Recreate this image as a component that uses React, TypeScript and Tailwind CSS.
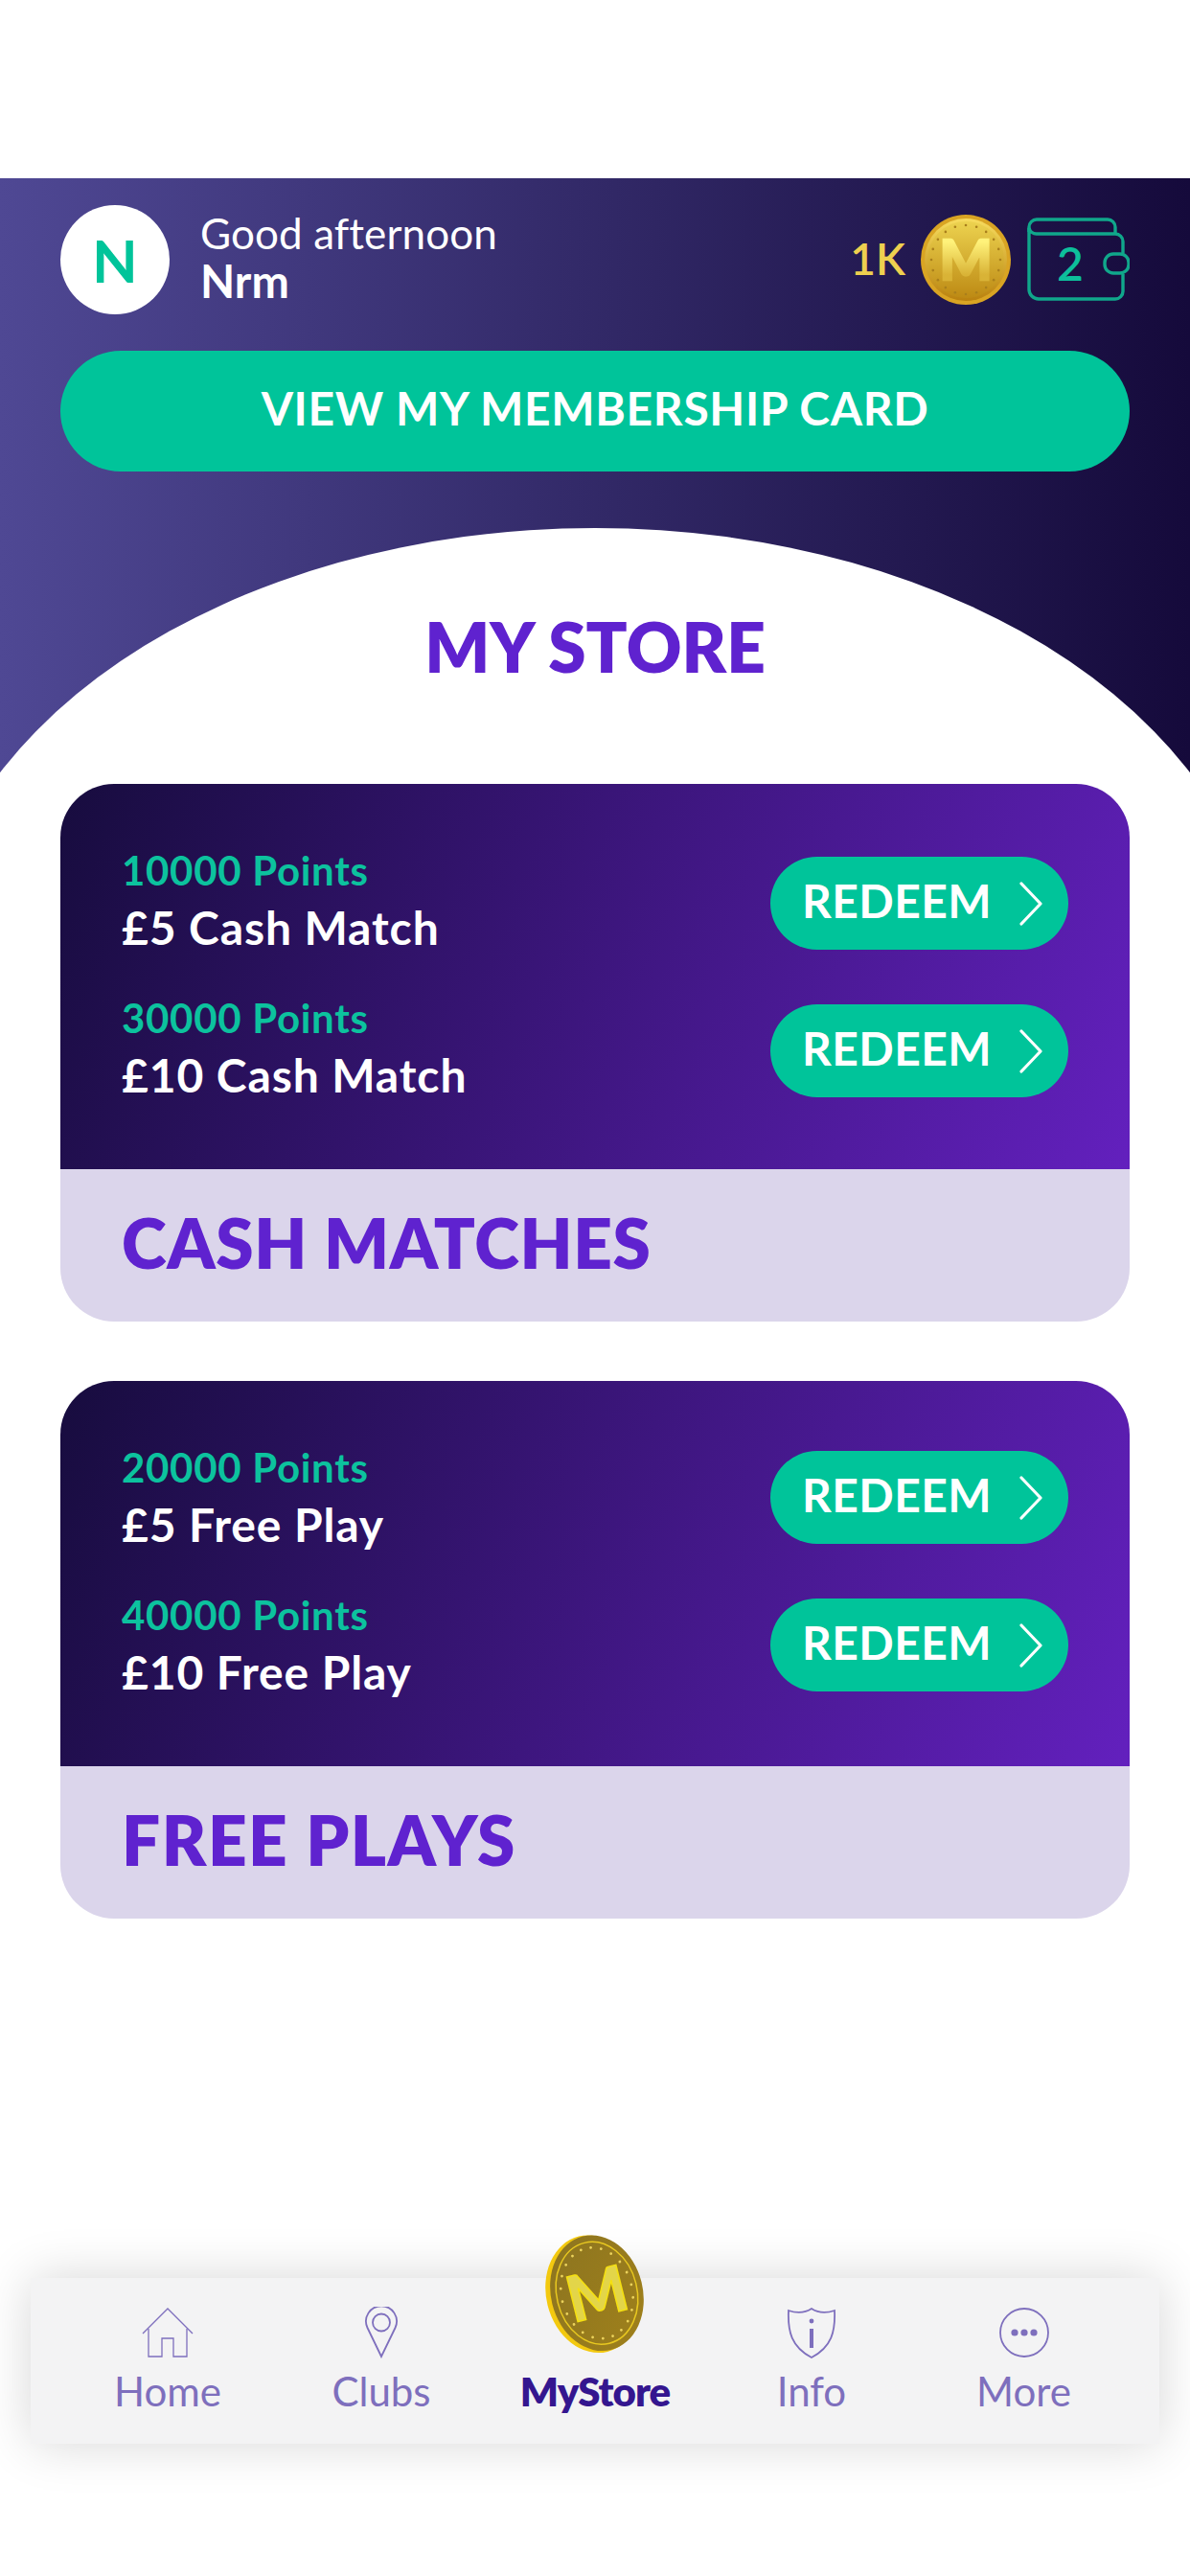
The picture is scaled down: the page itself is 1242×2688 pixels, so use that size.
import React from 'react';

const FONT = "font-['Lato','Noto_Sans',sans-serif]";

const FlatCoin: React.FC = () => (
  <svg width="96" height="96" viewBox="0 0 96 96" className="shrink-0">
    <defs>
      <linearGradient id="rim" x1="0" y1="0" x2="0" y2="1">
        <stop offset="0" stopColor="#f7dc5e" />
        <stop offset="1" stopColor="#b9810f" />
      </linearGradient>
      <linearGradient id="face" x1="0" y1="0" x2="0" y2="1">
        <stop offset="0" stopColor="#ecd24f" />
        <stop offset="1" stopColor="#bd8a14" />
      </linearGradient>
      <linearGradient id="letter" x1="0" y1="0" x2="0" y2="1">
        <stop offset="0.25" stopColor="#fff27a" />
        <stop offset="0.75" stopColor="#d9b336" />
      </linearGradient>
    </defs>
    <circle cx="48" cy="48" r="47" fill="#d9a423" />
    <circle cx="48" cy="48" r="43" fill="url(#rim)" />
    <circle cx="48" cy="48" r="40" fill="url(#face)" />
    {Array.from({ length: 20 }).map((_, i) => {
      const a = (i / 20) * Math.PI * 2;
      return <circle key={i} cx={48 + Math.cos(a) * 36} cy={48 + Math.sin(a) * 36} r="1.3" fill="#a97f1c" />;
    })}
    <text x="48" y="69" textAnchor="middle" fontFamily="Lato, sans-serif" fontWeight="900" fontSize="58" fill="url(#letter)" stroke="url(#letter)" strokeWidth="2.5">
      M
    </text>
  </svg>
);

const TiltedCoin: React.FC = () => (
  <svg width="110" height="130" viewBox="0 0 110 130">
    <defs>
      <linearGradient id="tilt" x1="0" y1="0" x2="1" y2="1">
        <stop offset="0" stopColor="#8c7420" />
        <stop offset="1" stopColor="#a0811b" />
      </linearGradient>
    </defs>
    <g transform="rotate(-14 55 65)">
      <ellipse cx="52" cy="65" rx="49" ry="62" fill="#f3c90f" />
      <ellipse cx="56" cy="65" rx="48" ry="61" fill="url(#tilt)" />
      <ellipse cx="56" cy="65" rx="42" ry="54" fill="none" stroke="#e8c820" strokeWidth="1.5" />
      {Array.from({ length: 22 }).map((_, i) => {
        const a = (i / 22) * Math.PI * 2;
        return <circle key={i} cx={56 + Math.cos(a) * 37} cy={65 + Math.sin(a) * 48} r="1.4" fill="#ecd35c" />;
      })}
      <text x="56" y="89" textAnchor="middle" fontFamily="Lato, sans-serif" fontWeight="900" fontSize="66" fill="#e3d549" stroke="#f5e010" strokeWidth="1.5">
        M
      </text>
    </g>
  </svg>
);

const Wallet: React.FC = () => (
  <div className="relative h-[90px] w-[108px] shrink-0">
    <svg width="108" height="90" viewBox="0 0 108 90" fill="none" stroke="#10a78b" strokeWidth="3.4">
      <path d="M3 16V11a8 8 0 0 1 8-8h74a8 8 0 0 1 8 8v7" />
      <path d="M3 12v64a10 10 0 0 0 10 10h80a8 8 0 0 0 8-8V60M101 38V26a8 8 0 0 0-8-8H11a8 8 0 0 1-8-6" />
      <rect x="82" y="39" width="25" height="20" rx="9" />
    </svg>
    <span className="absolute left-[32px] top-[19px] text-[48px] leading-[60px] font-semibold text-[#0dbf9b]">2</span>
  </div>
);

const Chevron: React.FC = () => (
  <svg width="26" height="46" viewBox="0 0 26 46" fill="none" stroke="#fff" strokeWidth="3.2" strokeLinecap="round" strokeLinejoin="round">
    <path d="M3 2l20 21L3 44" />
  </svg>
);

const OfferRow: React.FC<{ points: string; title: string; textPad: string }> = ({ points, title, textPad }) => (
  <div className="flex h-[97px] items-center justify-between">
    <div className={textPad}>
      <p className="text-[42px] leading-[48px] font-bold tracking-[0.7px] text-[#0cc29e]">{points}</p>
      <p className="mt-[10px] text-[48px] leading-[52px] font-bold tracking-[0.9px] text-white">{title}</p>
    </div>
    <button className="flex h-[97px] w-[311px] items-center rounded-full bg-[#00c49a] pl-[33px] text-[48px] font-bold tracking-[0.4px] text-white">
      <span className="w-[226px] pb-[5px] text-left">REDEEM</span>
      <Chevron />
    </button>
  </div>
);

const StoreCard: React.FC<{
  title: string;
  top: string;
  textPad: string;
  titleTracking: string;
  rows: { points: string; title: string }[];
}> = ({ title, top, textPad, titleTracking, rows }) => (
  <section className="mx-[63px] overflow-hidden rounded-[56px]">
    <div className={`flex h-[402px] flex-col gap-[57px] bg-[linear-gradient(112deg,#170c3e,#6320be)] px-[64px] ${top}`}>
      {rows.map((row) => (
        <OfferRow key={row.points} textPad={textPad} {...row} />
      ))}
    </div>
    <div className="flex h-[159px] items-center bg-[#dbd5eb] pb-[6px] pl-[64px]">
      <h2 className={`text-[71px] leading-none font-extrabold text-[#5f22cf] ${titleTracking}`}>{title}</h2>
    </div>
  </section>
);

const HomeIcon = () => (
  <svg width="56" height="54" viewBox="0 0 56 54" fill="none" stroke="#7e6fbd" strokeWidth="1.3">
    <path d="M2 28L28 2l26 26" />
    <path d="M8 23v29h14V33h12v19h14V23" />
  </svg>
);

const PinIcon = () => (
  <svg width="36" height="54" viewBox="0 0 36 54" fill="none" stroke="#7e6fbd" strokeWidth="1.8">
    <path d="M18 52L3.5 22a16 16 0 1 1 29 0z" />
    <circle cx="18" cy="16.5" r="9" />
  </svg>
);

const ShieldIcon = () => (
  <svg width="52" height="54" viewBox="0 0 52 54" fill="none" stroke="#7e6fbd" strokeWidth="1.8">
    <path d="M2 4c9 3 18 2 24-2 6 4 15 5 24 2 1 22-3 38-24 49C5 42 1 26 2 4z" />
    <path d="M26 23v20" strokeWidth="4" />
    <circle cx="26" cy="15" r="2.4" fill="#7e6fbd" stroke="none" />
  </svg>
);

const MoreIcon = () => (
  <svg width="54" height="54" viewBox="0 0 54 54" fill="none" stroke="#7e6fbd" strokeWidth="1.8">
    <circle cx="27" cy="27" r="25" />
    <circle cx="17" cy="27" r="3.6" fill="#7e6fbd" stroke="none" />
    <circle cx="27" cy="27" r="3.6" fill="#7e6fbd" stroke="none" />
    <circle cx="37" cy="27" r="3.6" fill="#7e6fbd" stroke="none" />
  </svg>
);

const NavItem: React.FC<{ label: string; icon?: React.ReactNode; active?: boolean; className?: string }> = ({ label, icon, active, className }) => (
  <div className={`flex w-[223px] flex-col items-center ${className ?? ''}`}>
    <div className="flex h-[54px] items-center justify-center">{icon}</div>
    <span className={`mt-[8px] text-[42px] leading-[52px] ${active ? 'font-extrabold tracking-[-1px] text-[#34168f]' : 'text-[#7e6fbd]'}`}>
      {label}
    </span>
  </div>
);

const App: React.FC = () => {
  return (
    <div className={`h-[2688px] w-[1242px] overflow-hidden bg-white ${FONT}`}>
      {/* Header */}
      <header className="relative mt-[186px] h-[620px] overflow-hidden bg-[linear-gradient(90deg,#4f4894,#150a3b)] px-[63px] pt-[28px]">
        <div className="absolute left-[-79px] top-[365px] h-[948px] w-[1400px] rounded-[50%] bg-white" />
        <div className="relative flex h-[114px] items-center">
          <div className="flex h-[114px] w-[114px] items-center justify-center rounded-full bg-white text-[62px] font-bold text-[#00c49a]">N</div>
          <div className="ml-[32px] flex-1 pb-[6px] text-white">
            <p className="text-[44px] leading-[50px] font-normal tracking-[0.1px]">Good afternoon</p>
            <p className="text-[47px] leading-[50px] font-bold">Nrm</p>
          </div>
          <span className="mr-[15px] pb-[4px] text-[46px] font-semibold text-[#eed04f]">1K</span>
          <FlatCoin />
          <div className="ml-[15px]">
            <Wallet />
          </div>
        </div>
        <button className="relative mt-[38px] h-[126px] w-full rounded-full bg-[#00c49a] pb-[6px] text-[48px] font-bold tracking-[0.66px] text-white">
          VIEW MY MEMBERSHIP CARD
        </button>
        <h1 className="relative mt-[141px] text-center text-[71px] leading-[84px] font-extrabold text-[#5f22cf]">MY STORE</h1>
      </header>

      {/* Store cards */}
      <main className="mt-[12px] flex flex-col gap-[62px]">
        <StoreCard
          title="CASH MATCHES"
          top="pt-[76px]"
          textPad="pb-[7px]"
          titleTracking="tracking-[0.6px]"
          rows={[
            { points: '10000 Points', title: '£5 Cash Match' },
            { points: '30000 Points', title: '£10 Cash Match' },
          ]}
        />
        <StoreCard
          title="FREE PLAYS"
          top="pt-[73px]"
          textPad="pb-[1px]"
          titleTracking="tracking-[1.5px]"
          rows={[
            { points: '20000 Points', title: '£5 Free Play' },
            { points: '40000 Points', title: '£10 Free Play' },
          ]}
        />
      </main>

      {/* Bottom nav */}
      <nav className="relative mx-[32px] mt-[375px] flex h-[173px] justify-center bg-[#f3f3f4] pt-[30px] shadow-[0_0_50px_rgba(0,0,0,0.16)]">
        <NavItem label="Home" icon={<HomeIcon />} />
        <NavItem label="Clubs" icon={<PinIcon />} />
        <NavItem label="MyStore" active />
        <NavItem label="Info" icon={<ShieldIcon />} className="pl-[6px]" />
        <NavItem label="More" icon={<MoreIcon />} className="pl-[3px]" />
        <div className="absolute left-[535px] top-[-49px]">
          <TiltedCoin />
        </div>
      </nav>
    </div>
  );
};

export default App;
